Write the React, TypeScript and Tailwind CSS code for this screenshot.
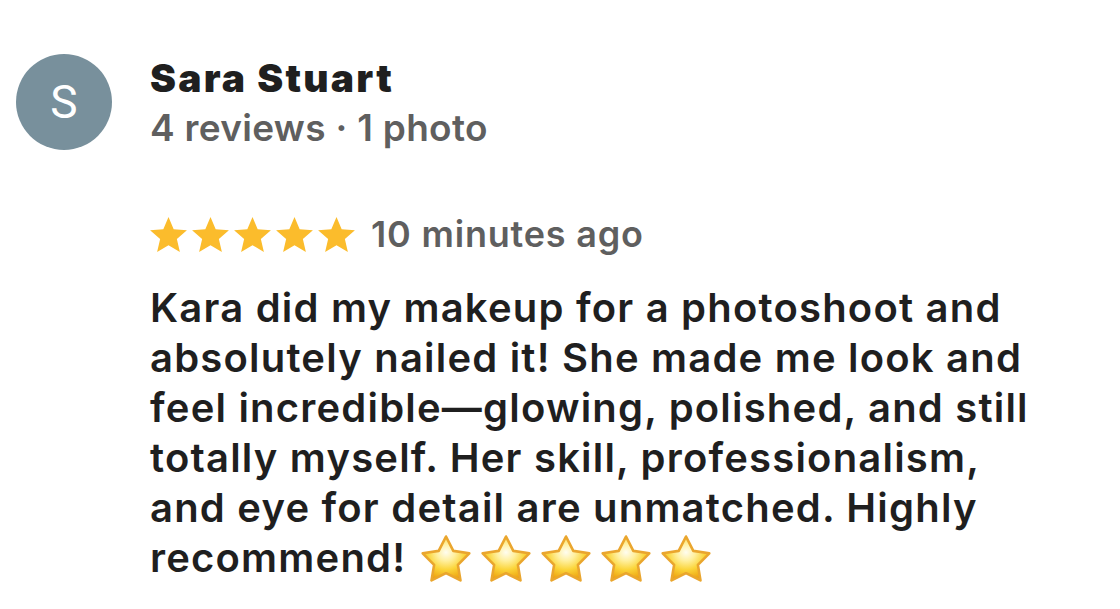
import React from "react";

const STAR =
  "M12 17.27L18.18 21l-1.64-7.03L22 9.24l-7.19-.61L12 2 9.19 8.63 2 9.24l5.46 4.73L5.82 21z";

function RatingStar() {
  return (
    <svg viewBox="2 2 20 19" className="w-[37px] h-[35px] shrink-0">
      <path d={STAR} fill="#fbbc2c" />
    </svg>
  );
}

function EmojiStar({ id }: { id: number }) {
  return (
    <svg viewBox="0 0 52 50" className="block w-[52px] h-[50px]">
      <defs>
        <radialGradient id={`g${id}`} cx="50%" cy="36%" r="64%">
          <stop offset="0%" stopColor="#fffdf0" />
          <stop offset="30%" stopColor="#fff0a0" />
          <stop offset="62%" stopColor="#fbd53a" />
          <stop offset="100%" stopColor="#eda10d" />
        </radialGradient>
      </defs>
      <path
        d="M26 3.5L33.3 17.9L49.3 20.3L37.9 31.9L40.5 47.4L26 40.2L11.5 47.4L14.1 31.9L2.7 20.3L18.7 17.9Z"
        fill={`url(#g${id})`}
        stroke="#eaa62e"
        strokeWidth="2.6"
        strokeLinejoin="round"
      />
    </svg>
  );
}

const lines = [
  "Kara did my makeup for a photoshoot and",
  "absolutely nailed it! She made me look and",
  "feel incredible\u2014glowing, polished, and still",
  "totally myself. Her skill, professionalism,",
  "and eye for detail are unmatched. Highly",
];

export default function App() {
  return (
    <div
      className="w-[1120px] h-[609px] bg-white overflow-hidden"
      style={{ fontFamily: "Inter, 'Noto Sans', sans-serif" }}
    >
      <div className="flex pt-[54px] pl-[16px] gap-[38px]">
        <div className="w-[96px] h-[96px] rounded-full bg-[#78909c] flex items-center justify-center shrink-0">
          <span className="text-white text-[46px] leading-none font-normal" style={{ fontFamily: "Roboto, sans-serif" }}>
            S
          </span>
        </div>
        <div className="flex flex-col">
          <div className="text-[39px] leading-[48px] font-black text-[#1f1f1f] tracking-[2.2px]">
            Sara Stuart
          </div>
          <div className="mt-[2px] text-[37px] leading-[48px] font-semibold text-[#5f5f5f] tracking-[0.3px]">
            4 reviews · 1 photo
          </div>
          <div className="flex items-center mt-[62px] h-[40px]">
            <div className="flex gap-[5px]">
              {[0, 1, 2, 3, 4].map((i) => (
                <RatingStar key={i} />
              ))}
            </div>
            <span className="ml-[16px] text-[36px] font-semibold text-[#5f5f5f] tracking-[0.8px]">
              10 minutes ago
            </span>
          </div>
          <div className="mt-[29px] text-[40px] leading-[50px] font-semibold text-[#1f1f1f] tracking-[1.2px]">
            {lines.map((l) => (
              <div key={l} className="whitespace-nowrap">
                {l}
              </div>
            ))}
            <div className="whitespace-nowrap flex items-center">
              <span>recommend!</span>
              <span className="ml-[14px] flex gap-[8px]">
                {[0, 1, 2, 3, 4].map((i) => (
                  <EmojiStar key={i} id={i} />
                ))}
              </span>
            </div>
          </div>
        </div>
      </div>
    </div>
  );
}
